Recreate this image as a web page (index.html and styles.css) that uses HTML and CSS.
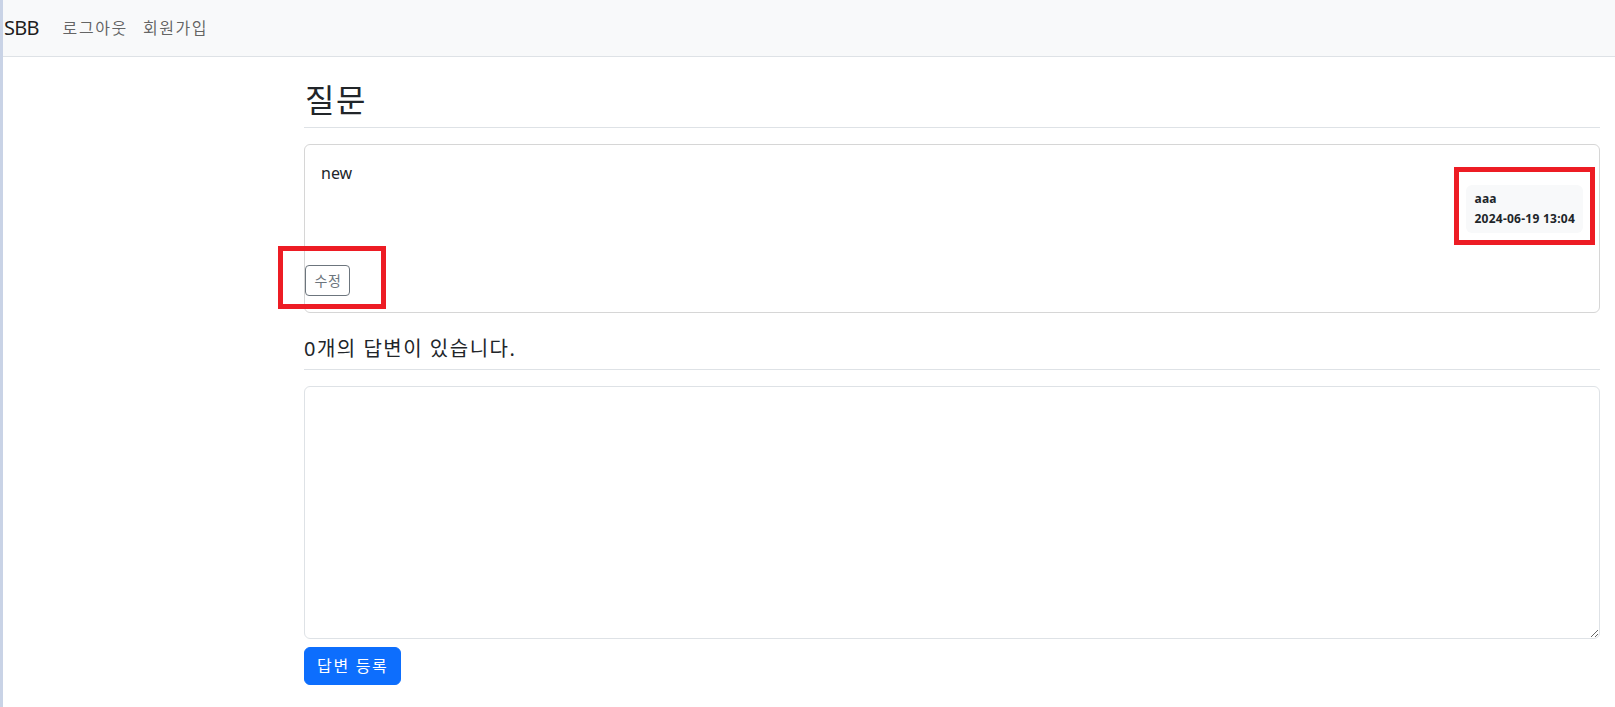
FILE: index.html
```html
<!DOCTYPE html>
<html lang="ko">
<head>
<meta charset="utf-8">
<title>SBB</title>
<link rel="stylesheet" href="styles.css">
</head>
<body>
<nav class="navbar">
  <a class="brand" href="#">SBB</a>
  <ul class="nav">
    <li><a class="nav-link" href="#">로그아웃</a></li>
    <li><a class="nav-link" href="#">회원가입</a></li>
  </ul>
</nav>
<main class="container">
  <h2 class="title">질문</h2>
  <div class="card">
    <div class="card-body">
      <div class="card-text">new</div>
      <div class="meta">
        <div class="badge">
          <div class="author">aaa</div>
          <div>2024-06-19 13:04</div>
        </div>
      </div>
    </div>
    <div class="actions"><a class="btn-edit" href="#">수정</a></div>
  </div>
  <h5 class="answer-count">0개의 답변이 있습니다.</h5>
  <form class="answer-form">
    <textarea class="answer-input" name="content" rows="10"></textarea>
    <button type="button" class="btn-submit">답변 등록</button>
  </form>
</main>
<div class="mark mark-badge"></div>
<div class="mark mark-edit"></div>
</body>
</html>
```
FILE: styles.css
```css
* { box-sizing: border-box; }
html, body { margin: 0; padding: 0; }
body {
  font-family: "Noto Sans", "Noto Sans CJK KR", sans-serif;
  font-size: 16px;
  line-height: 1.5;
  color: #212529;
  background: #fff;
  border-left: 3px solid #c9d3e6;
  min-height: 707px;
}
a { text-decoration: none; }

.navbar {
  display: flex;
  align-items: center;
  height: 57px;
  padding: 8px 0 8px 1px;
  background: #f8f9fa;
  border-bottom: 1px solid #dee2e6;
}
.brand {
  font-size: 20px;
  line-height: 30px;
  padding: 5px 0;
  margin-right: 16px;
  color: rgba(0,0,0,.9);
  letter-spacing: -0.8px;
}
.nav {
  display: flex;
  list-style: none;
  margin: 0;
  padding: 0;
}
.nav-link {
  display: block;
  padding: 8px 7px 8px 8px;
  color: rgba(0,0,0,.62);
  line-height: 24px;
  letter-spacing: 1.6px;
}

.container {
  width: 1296px;
  margin: 16px 0 0 301px;
}
.title {
  margin: 0 0 8px;
  padding: 8px 0 8px 1px;
  font-size: 32px;
  font-weight: 400;
  line-height: 38px;
  border-bottom: 1px solid #dee2e6;
  letter-spacing: 1.5px;
}
.card {
  margin-top: 16px;
  margin-bottom: 16px;
  border: 1px solid #d6d6d6;
  border-radius: 6px;
}
.card-body {
  padding: 16px;
}
.card-text {
  white-space: pre-line;
  height: 24px;
  line-height: 24px;
}
.meta {
  display: flex;
  justify-content: flex-end;
}
.badge {
  background: #f8f9fa;
  color: #212529;
  font-size: 12px;
  font-weight: 700;
  line-height: 12px;
  padding: 8px;
  border-radius: 6px;
  text-align: left;
  letter-spacing: 0.25px;
}
.author { margin-bottom: 8px; }

.actions {
  margin: 16px 0;
  display: flex;
}
.btn-edit {
  display: inline-block;
  font-size: 14px;
  line-height: 21px;
  height: 31px;
  padding: 4px 8px 4px 8.5px;
  color: #6c757d;
  border: 1px solid #6c757d;
  border-radius: 4px;
  letter-spacing: 0.5px;
}

.answer-count {
  margin: 16px 0;
  padding: 8px 0;
  font-size: 20px;
  font-weight: 400;
  line-height: 24px;
  border-bottom: 1px solid #dee2e6;
  letter-spacing: 1.5px;
}
.answer-form {
  margin: 16px 0;
}
.answer-input {
  display: block;
  width: 100%;
  height: 253px;
  padding: 6px 12px;
  font: inherit;
  line-height: 24px;
  color: #212529;
  border: 1px solid #dee2e6;
  border-radius: 6px;
  resize: vertical;
  margin: 0;
}
.btn-submit {
  display: inline-block;
  margin-top: 8px;
  height: 38px;
  padding: 6px 11px 6px 12px;
  font: inherit;
  line-height: 24px;
  color: #fff;
  background: #0d6efd;
  border: 1px solid #0d6efd;
  border-radius: 6px;
  letter-spacing: 1.7px;
}

.mark {
  position: absolute;
  border: 5px solid #ed1c24;
}
.mark-badge {
  left: 1454px;
  top: 167px;
  width: 141px;
  height: 78px;
}
.mark-edit {
  left: 278px;
  top: 246px;
  width: 108px;
  height: 63px;
}
```
